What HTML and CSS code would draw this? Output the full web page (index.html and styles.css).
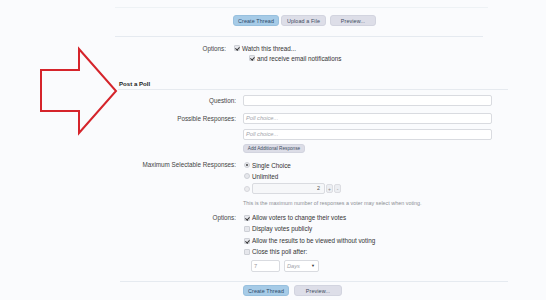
FILE: index.html
```html
<!DOCTYPE html>
<html>
<head>
<meta charset="utf-8">
<link rel="stylesheet" href="styles.css">
</head>
<body>
<div class="page">
  <div class="sep sep-a"></div>
  <div class="btn-row top-btns">
    <span class="btn primary w46">Create Thread</span>
    <span class="btn w45">Upload a File</span>
    <span class="btn w46 ml2">Preview...</span>
  </div>
  <div class="sep sep-b"></div>

  <div class="opt-row first">
    <div class="lbl-top">Options:</div>
    <div class="chk-line"><span class="cb on"></span>Watch this thread...</div>
  </div>
  <div class="opt-row">
    <div class="lbl-top"></div>
    <div class="chk-line sub"><span class="cb on"></span>and receive email notifications</div>
  </div>

  <div class="poll-title">Post a Poll</div>

  <div class="row r-question">
    <div class="lbl">Question:</div>
    <div class="ctl"><div class="input wide"></div></div>
  </div>
  <div class="row r-resp">
    <div class="lbl">Possible Responses:</div>
    <div class="ctl">
      <div class="input wide ph">Poll choice...</div>
      <div class="input wide ph mt5">Poll choice...</div>
      <span class="btn small add">Add Additional Response</span>
    </div>
  </div>
  <div class="row r-max">
    <div class="lbl lh10">Maximum Selectable Responses:</div>
    <div class="ctl">
      <div class="chk-line"><span class="rd on"></span>Single Choice</div>
      <div class="chk-line mt1"><span class="rd"></span>Unlimited</div>
      <div class="num-line">
        <span class="rd"></span>
        <span class="input num">2</span>
        <span class="spin">+</span><span class="spin">-</span>
      </div>
      <div class="hint">This is the maximum number of responses a voter may select when voting.</div>
    </div>
  </div>
  <div class="row r-opts">
    <div class="lbl lh11">Options:</div>
    <div class="ctl">
      <div class="chk-line h11"><span class="cb on"></span>Allow voters to change their votes</div>
      <div class="chk-line h11"><span class="cb"></span>Display votes publicly</div>
      <div class="chk-line h11 mt1"><span class="cb on"></span>Allow the results to be viewed without voting</div>
      <div class="chk-line h11"><span class="cb"></span>Close this poll after:</div>
      <div class="close-line">
        <span class="input days-num ph">7</span>
        <span class="input days-sel ph">Days<span class="caret">&#9660;</span></span>
      </div>
    </div>
  </div>
  <div class="sep sep-c"></div>
  <div class="btn-row bottom-btns">
    <span class="btn primary w46">Create Thread</span>
    <span class="btn w48 ml5">Preview...</span>
  </div>

  <svg class="arrow" width="546" height="300" viewBox="0 0 546 300">
    <polygon points="41,63 79,63 79,42 116,84 79,126 79,104 41,104" fill="none" stroke="#d5242b" stroke-width="2" stroke-linejoin="miter"/>
  </svg>
</div>
</body>
</html>
```

FILE: styles.css
```css
html, body {
  margin: 0;
  padding: 0;
  background: #fafbfd;
}
body {
  font-family: "Liberation Sans", Arial, sans-serif;
  font-size: 6.3px;
  color: #333;
  width: 546px;
  height: 300px;
  overflow: hidden;
}
.page {
  position: relative;
  width: 546px;
  height: 300px;
}
.sep {
  height: 1px;
  background: #e5eaf0;
}
.sep-a { margin-top: 7px; margin-left: 115px; width: 373px; background: #eef2f5; }
.sep-b { margin-top: 10px; margin-left: 115px; width: 368px; }
.sep-c { margin-top: 9px; margin-left: 120px; width: 388px; }

.btn-row { display: flex; }
.top-btns { margin-top: 7px; margin-left: 233px; gap: 2px; }
.bottom-btns { margin-top: 3px; margin-left: 243px; }
.btn {
  display: inline-flex;
  align-items: center;
  justify-content: center;
  height: 11px;
  border-radius: 3px;
  background: #dddee8;
  border: 1px solid #d2d4df;
  box-sizing: border-box;
  font-size: 5.4px;
  color: #3c4a60;
  letter-spacing: 0.1px;
}
.btn.primary {
  background: #a6cbe7;
  border-color: #98c0de;
  color: #2c4a6a;
}
.w45 { width: 45px; }
.w46 { width: 46px; }
.w48 { width: 48px; }
.ml2 { margin-left: 2px; }
.ml5 { margin-left: 5px; }

.opt-row { display: flex; height: 10px; align-items: center; }
.opt-row.first { margin-top: 6px; }
.lbl-top { width: 226px; flex: none; text-align: right; color: #444; margin-right: 7px; }
.chk-line {
  display: flex;
  align-items: center;
  height: 10px;
  color: #333;
  white-space: nowrap;
}
.chk-line.sub { margin-left: 15px; }
.chk-line.h11 { height: 11px; }

.cb, .rd {
  display: inline-block;
  width: 6px;
  height: 6px;
  box-sizing: border-box;
  border: 1px solid #cdd0d6;
  background: #e6e7ec;
  margin-right: 2px;
  margin-left: 1px;
  position: relative;
  flex: none;
}
.cb { border-radius: 1px; }
.cb.on::after {
  content: "";
  position: absolute;
  left: 1px;
  top: 0px;
  width: 1.5px;
  height: 3px;
  border-right: 1.1px solid #333;
  border-bottom: 1.1px solid #333;
  transform: rotate(40deg);
}
.rd { border-radius: 50%; }
.rd.on::after {
  content: "";
  position: absolute;
  left: 1px;
  top: 1px;
  width: 2px;
  height: 2px;
  border-radius: 50%;
  background: #444;
}

.poll-title {
  margin-top: 16px;
  margin-left: 118px;
  width: 389px;
  padding-left: 1px;
  height: 10px;
  line-height: 10px;
  font-weight: bold;
  font-size: 6.1px;
  color: #222;
  border-bottom: 1px solid #e6eaef;
}

.row { display: flex; }
.lbl {
  width: 236px;
  text-align: right;
  color: #444;
  flex: none;
  line-height: 11px;
}
.lbl.lh10 { line-height: 10px; }
.lbl.lh11 { line-height: 11px; }
.ctl { margin-left: 7px; }

.input {
  display: block;
  box-sizing: border-box;
  height: 11px;
  background: #fff;
  border: 1px solid #d9dbe0;
  border-radius: 2px;
}
.input.wide { width: 249px; }
.ph {
  font-style: italic;
  color: #a0a3aa;
  font-size: 5.7px;
  line-height: 9px;
  padding-left: 2px;
}
.mt5 { margin-top: 5px; }
.mt1 { margin-top: 1px; }

.r-question { margin-top: 5px; }
.r-resp { margin-top: 7px; }
.btn.small {
  margin-top: 4px;
  height: 9px;
  width: 62px;
  font-size: 4.7px;
  letter-spacing: 0;
  background: #dcdde7;
}
.r-max { margin-top: 7px; }
.num-line {
  display: flex;
  align-items: center;
  margin-top: 2px;
  height: 11px;
}
.num-line .rd { background: #ececef; border-color: #d6d7dc; }
.input.num {
  width: 73px;
  height: 11px;
  background: #f6f7f9;
  text-align: right;
  padding-right: 4px;
  font-size: 5.4px;
  line-height: 9px;
  color: #555;
}
.spin {
  display: inline-flex;
  align-items: center;
  justify-content: center;
  width: 7px;
  height: 9px;
  margin-left: 1px;
  border: 1px solid #dcdde2;
  border-radius: 2px;
  background: #eceef2;
  color: #888;
  font-size: 5px;
  box-sizing: border-box;
}
.hint {
  margin-top: 4px;
  font-size: 5.4px;
  color: #8d9096;
  line-height: 10px;
  white-space: nowrap;
}
.r-opts { margin-top: 4px; }
.close-line {
  display: flex;
  margin-top: 3px;
  margin-left: 8px;
}
.input.days-num {
  width: 29px;
  height: 12px;
  line-height: 10px;
  color: #999;
  font-style: normal;
}
.input.days-sel {
  position: relative;
  width: 35px;
  height: 12px;
  line-height: 10px;
  margin-left: 4px;
}
.caret {
  position: absolute;
  right: 3px;
  top: 0;
  font-style: normal;
  font-size: 4px;
  color: #333;
}
.arrow {
  position: absolute;
  left: 0;
  top: 0;
  pointer-events: none;
}
```
